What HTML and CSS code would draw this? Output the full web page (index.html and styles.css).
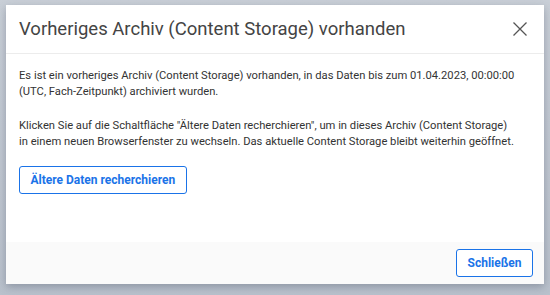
FILE: index.html
```html
<!DOCTYPE html>
<html lang="de">
<head>
<meta charset="utf-8">
<link rel="stylesheet" href="styles.css">
</head>
<body>
<div class="backdrop">
  <div class="dialog">
    <div class="dialog-header">
      <h1 class="dialog-title">Vorheriges Archiv (Content Storage) vorhanden</h1>
      <button class="close-btn" aria-label="Schließen">
        <svg width="16" height="16" viewBox="0 0 16 16"><path d="M1.5 1.5 L14.5 14.5 M14.5 1.5 L1.5 14.5" stroke="#555" stroke-width="1.3" fill="none"/></svg>
      </button>
    </div>
    <div class="dialog-body">
      <p class="para">Es ist ein vorheriges Archiv (Content Storage) vorhanden, in das Daten bis zum 01.04.2023, 00:00:00<br>(UTC, Fach-Zeitpunkt) archiviert wurden.</p>
      <p class="para para-last">Klicken Sie auf die Schaltfläche "Ältere Daten recherchieren", um in dieses Archiv (Content Storage)<br>in einem neuen Browserfenster zu wechseln. Das aktuelle Content Storage bleibt weiterhin geöffnet.</p>
      <button class="btn btn-research">Ältere Daten recherchieren</button>
    </div>
    <div class="dialog-footer">
      <button class="btn">Schließen</button>
    </div>
  </div>
</div>
</body>
</html>
```
FILE: styles.css
```css
html, body {
  margin: 0;
  padding: 0;
  height: 100%;
}
body {
  font-family: Roboto, "Liberation Sans", sans-serif;
  background: linear-gradient(180deg, #c9cfd7 0%, #b9c1cc 100%);
}
.backdrop {
  padding: 5px 6px 0 6px;
}
.dialog {
  width: 538px;
  height: 279px;
  background: #fff;
  box-shadow: 0 3px 8px rgba(60, 70, 90, 0.35);
  display: flex;
  flex-direction: column;
  box-sizing: border-box;
}
.dialog-header {
  height: 49px;
  box-sizing: border-box;
  border-bottom: 1px solid #ececec;
  display: flex;
  align-items: center;
  justify-content: space-between;
  padding: 0 16px 0 13px;
}
.dialog-title {
  margin: 0;
  font-size: 18.5px;
  font-weight: 400;
  color: #444;
}
.close-btn {
  border: 0;
  background: none;
  padding: 0;
  width: 16px;
  height: 16px;
  display: flex;
}
.dialog-body {
  flex: 1;
  padding: 14px 13px 0 13px;
  color: #333;
  font-size: 11.2px;
  line-height: 16px;
}
.para {
  margin: 0 0 18px 0;
  white-space: nowrap;
}
.para-last {
  margin-bottom: 16px;
}
.btn {
  font-family: Roboto, "Liberation Sans", sans-serif;
  font-size: 12px;
  font-weight: 700;
  color: #1a73e8;
  background: #fff;
  border: 1px solid #1a73e8;
  border-radius: 3px;
  height: 28px;
  padding: 0 10.5px;
}
.dialog-footer {
  height: 42px;
  background: #fafafa;
  display: flex;
  align-items: center;
  justify-content: flex-end;
  padding: 0 11px;
}
```
